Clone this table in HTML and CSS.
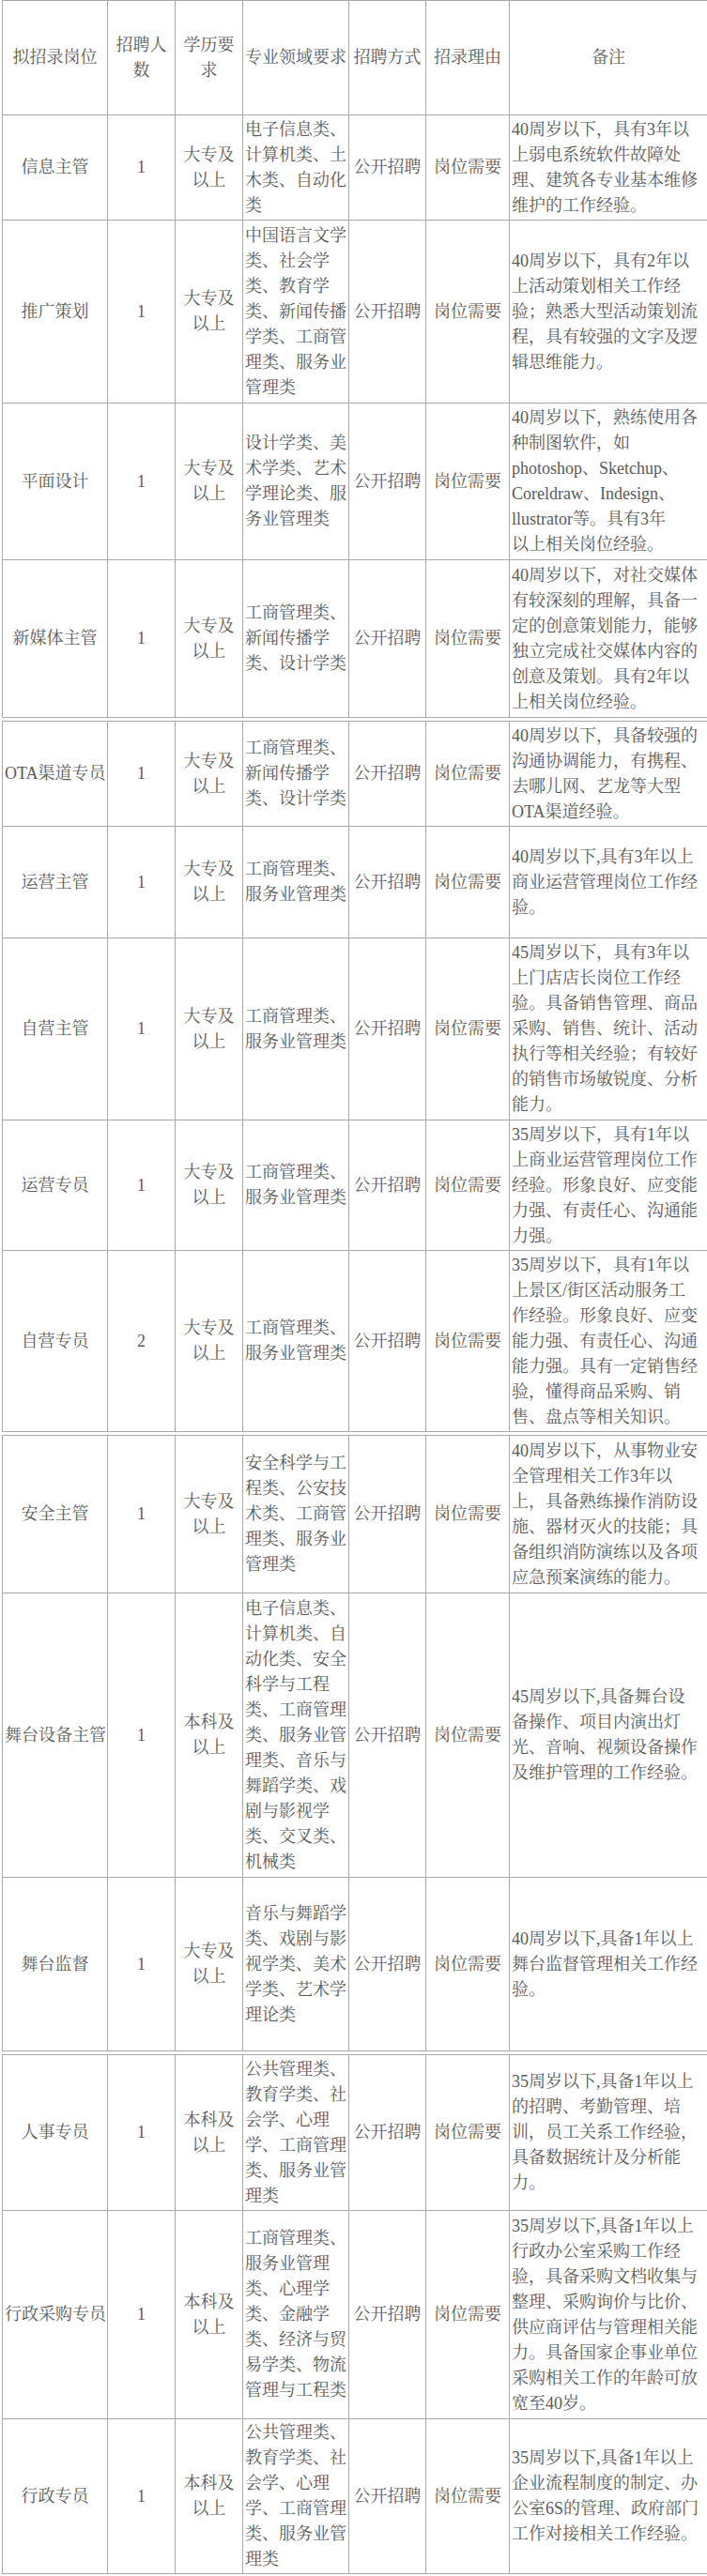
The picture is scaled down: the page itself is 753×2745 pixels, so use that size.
FILE: index.html
```html
<!DOCTYPE html>
<html lang="zh-CN">
<head>
<meta charset="utf-8">
<title>招聘岗位表</title>
<link rel="stylesheet" href="styles.css">
</head>
<body>
<div class="page">

<table class="seg seg1">
<colgroup><col class="w1"><col class="w2"><col class="w3"><col class="w4"><col class="w5"><col class="w6"><col class="w7"></colgroup>
<tr class="h-head">
<td>拟招录岗位</td><td>招聘人<br>数</td><td>学历要<br>求</td><td>专业领域要求</td><td>招聘方式</td><td>招录理由</td><td>备注</td>
</tr>
<tr class="h112">
<td>信息主管</td><td>1</td><td>大专及<br>以上</td>
<td class="l">电子信息类、<br>计算机类、土<br>木类、自动化<br>类</td>
<td>公开招聘</td><td>岗位需要</td>
<td class="l">40周岁以下，具有3年以<br>上弱电系统软件故障处<br>理、建筑各专业基本维修<br>维护的工作经验。</td>
</tr>
<tr class="h195">
<td>推广策划</td><td>1</td><td>大专及<br>以上</td>
<td class="l">中国语言文学<br>类、社会学<br>类、教育学<br>类、新闻传播<br>学类、工商管<br>理类、服务业<br>管理类</td>
<td>公开招聘</td><td>岗位需要</td>
<td class="l">40周岁以下，具有2年以<br>上活动策划相关工作经<br>验；熟悉大型活动策划流<br>程，具有较强的文字及逻<br>辑思维能力。</td>
</tr>
<tr class="h167">
<td>平面设计</td><td>1</td><td>大专及<br>以上</td>
<td class="l">设计学类、美<br>术学类、艺术<br>学理论类、服<br>务业管理类</td>
<td>公开招聘</td><td>岗位需要</td>
<td class="l">40周岁以下，熟练使用各<br>种制图软件，如<br>photoshop、Sketchup、<br>Coreldraw、Indesign、<br>llustrator等。具有3年<br>以上相关岗位经验。</td>
</tr>
<tr class="h168">
<td>新媒体主管</td><td>1</td><td>大专及<br>以上</td>
<td class="l">工商管理类、<br>新闻传播学<br>类、设计学类</td>
<td>公开招聘</td><td>岗位需要</td>
<td class="l">40周岁以下，对社交媒体<br>有较深刻的理解，具备一<br>定的创意策划能力，能够<br>独立完成社交媒体内容的<br>创意及策划。具有2年以<br>上相关岗位经验。</td>
</tr>
</table>

<table class="seg">
<colgroup><col class="w1"><col class="w2"><col class="w3"><col class="w4"><col class="w5"><col class="w6"><col class="w7"></colgroup>
<tr class="h112">
<td>OTA渠道专员</td><td>1</td><td>大专及<br>以上</td>
<td class="l">工商管理类、<br>新闻传播学<br>类、设计学类</td>
<td>公开招聘</td><td>岗位需要</td>
<td class="l">40周岁以下，具备较强的<br>沟通协调能力，有携程、<br>去哪儿网、艺龙等大型<br>OTA渠道经验。</td>
</tr>
<tr class="h119">
<td>运营主管</td><td>1</td><td>大专及<br>以上</td>
<td class="l">工商管理类、<br>服务业管理类</td>
<td>公开招聘</td><td>岗位需要</td>
<td class="l">40周岁以下,具有3年以上<br>商业运营管理岗位工作经<br>验。</td>
</tr>
<tr class="h194">
<td>自营主管</td><td>1</td><td>大专及<br>以上</td>
<td class="l">工商管理类、<br>服务业管理类</td>
<td>公开招聘</td><td>岗位需要</td>
<td class="l">45周岁以下，具有3年以<br>上门店店长岗位工作经<br>验。具备销售管理、商品<br>采购、销售、统计、活动<br>执行等相关经验；有较好<br>的销售市场敏锐度、分析<br>能力。</td>
</tr>
<tr class="h139">
<td>运营专员</td><td>1</td><td>大专及<br>以上</td>
<td class="l">工商管理类、<br>服务业管理类</td>
<td>公开招聘</td><td>岗位需要</td>
<td class="l">35周岁以下，具有1年以<br>上商业运营管理岗位工作<br>经验。形象良好、应变能<br>力强、有责任心、沟通能<br>力强。</td>
</tr>
<tr class="h193">
<td>自营专员</td><td>2</td><td>大专及<br>以上</td>
<td class="l">工商管理类、<br>服务业管理类</td>
<td>公开招聘</td><td>岗位需要</td>
<td class="l">35周岁以下，具有1年以<br>上景区/街区活动服务工<br>作经验。形象良好、应变<br>能力强、有责任心、沟通<br>能力强。具有一定销售经<br>验，懂得商品采购、销<br>售、盘点等相关知识。</td>
</tr>
</table>

<table class="seg">
<colgroup><col class="w1"><col class="w2"><col class="w3"><col class="w4"><col class="w5"><col class="w6"><col class="w7"></colgroup>
<tr class="h168">
<td>安全主管</td><td>1</td><td>大专及<br>以上</td>
<td class="l">安全科学与工<br>程类、公安技<br>术类、工商管<br>理类、服务业<br>管理类</td>
<td>公开招聘</td><td>岗位需要</td>
<td class="l">40周岁以下，从事物业安<br>全管理相关工作3年以<br>上，具备熟练操作消防设<br>施、器材灭火的技能；具<br>备组织消防演练以及各项<br>应急预案演练的能力。</td>
</tr>
<tr class="h303">
<td>舞台设备主管</td><td>1</td><td>本科及<br>以上</td>
<td class="l">电子信息类、<br>计算机类、自<br>动化类、安全<br>科学与工程<br>类、工商管理<br>类、服务业管<br>理类、音乐与<br>舞蹈学类、戏<br>剧与影视学<br>类、交叉类、<br>机械类</td>
<td>公开招聘</td><td>岗位需要</td>
<td class="l">45周岁以下,具备舞台设<br>备操作、项目内演出灯<br>光、音响、视频设备操作<br>及维护管理的工作经验。</td>
</tr>
<tr class="h185">
<td>舞台监督</td><td>1</td><td>大专及<br>以上</td>
<td class="l">音乐与舞蹈学<br>类、戏剧与影<br>视学类、美术<br>学类、艺术学<br>理论类</td>
<td>公开招聘</td><td>岗位需要</td>
<td class="l">40周岁以下,具备1年以上<br>舞台监督管理相关工作经<br>验。</td>
</tr>
</table>

<table class="seg seg4">
<colgroup><col class="w1"><col class="w2"><col class="w3"><col class="w4"><col class="w5"><col class="w6"><col class="w7"></colgroup>
<tr class="h166">
<td>人事专员</td><td>1</td><td>本科及<br>以上</td>
<td class="l">公共管理类、<br>教育学类、社<br>会学、心理<br>学、工商管理<br>类、服务业管<br>理类</td>
<td>公开招聘</td><td>岗位需要</td>
<td class="l">35周岁以下,具备1年以上<br>的招聘、考勤管理、培<br>训，员工关系工作经验，<br>具备数据统计及分析能<br>力。</td>
</tr>
<tr class="h222">
<td>行政采购专员</td><td>1</td><td>本科及<br>以上</td>
<td class="l">工商管理类、<br>服务业管理<br>类、心理学<br>类、金融学<br>类、经济与贸<br>易学类、物流<br>管理与工程类</td>
<td>公开招聘</td><td>岗位需要</td>
<td class="l">35周岁以下,具备1年以上<br>行政办公室采购工作经<br>验，具备采购文档收集与<br>整理、采购询价与比价、<br>供应商评估与管理相关能<br>力。具备国家企事业单位<br>采购相关工作的年龄可放<br>宽至40岁。</td>
</tr>
<tr class="h165">
<td>行政专员</td><td>1</td><td>本科及<br>以上</td>
<td class="l">公共管理类、<br>教育学类、社<br>会学、心理<br>学、工商管理<br>类、服务业管<br>理类</td>
<td>公开招聘</td><td>岗位需要</td>
<td class="l">35周岁以下,具备1年以上<br>企业流程制度的制定、办<br>公室6S的管理、政府部门<br>工作对接相关工作经验。</td>
</tr>
</table>

</div>
</body>
</html>
```

FILE: styles.css
```css
html, body {
  margin: 0;
  padding: 0;
  background: #ffffff;
}

.page {
  padding: 0 0 0 2px;
  display: flex;
  flex-direction: column;
  gap: 3px;
}

.seg {
  width: 751px;
  table-layout: fixed;
  border-collapse: collapse;
  font-family: "Liberation Serif", "Noto Serif CJK SC", "Noto Sans CJK SC", serif;
  font-size: 18px;
  line-height: 27px;
  color: #5a5a5a;
}

.seg td {
  border: 1px solid #a8a8a8;
  padding: 0 2px;
  text-align: center;
  vertical-align: middle;
  white-space: nowrap;
  overflow: hidden;
}

.seg td.l {
  text-align: left;
}

.w1 { width: 112px; }
.w2 { width: 72px; }
.w3 { width: 72px; }
.w4 { width: 113px; }
.w5 { width: 82px; }
.w6 { width: 89px; }
.w7 { width: 211px; }

.h-head { height: 122px; }
.h112 { height: 112px; }
.h119 { height: 119px; }
.h139 { height: 139px; }
.h165 { height: 165px; }
.h166 { height: 166px; }
.h167 { height: 167px; }
.h168 { height: 168px; }
.h185 { height: 185px; }
.h193 { height: 193px; }
.h194 { height: 194px; }
.h195 { height: 195px; }
.h222 { height: 222px; }
.h303 { height: 303px; }
```
